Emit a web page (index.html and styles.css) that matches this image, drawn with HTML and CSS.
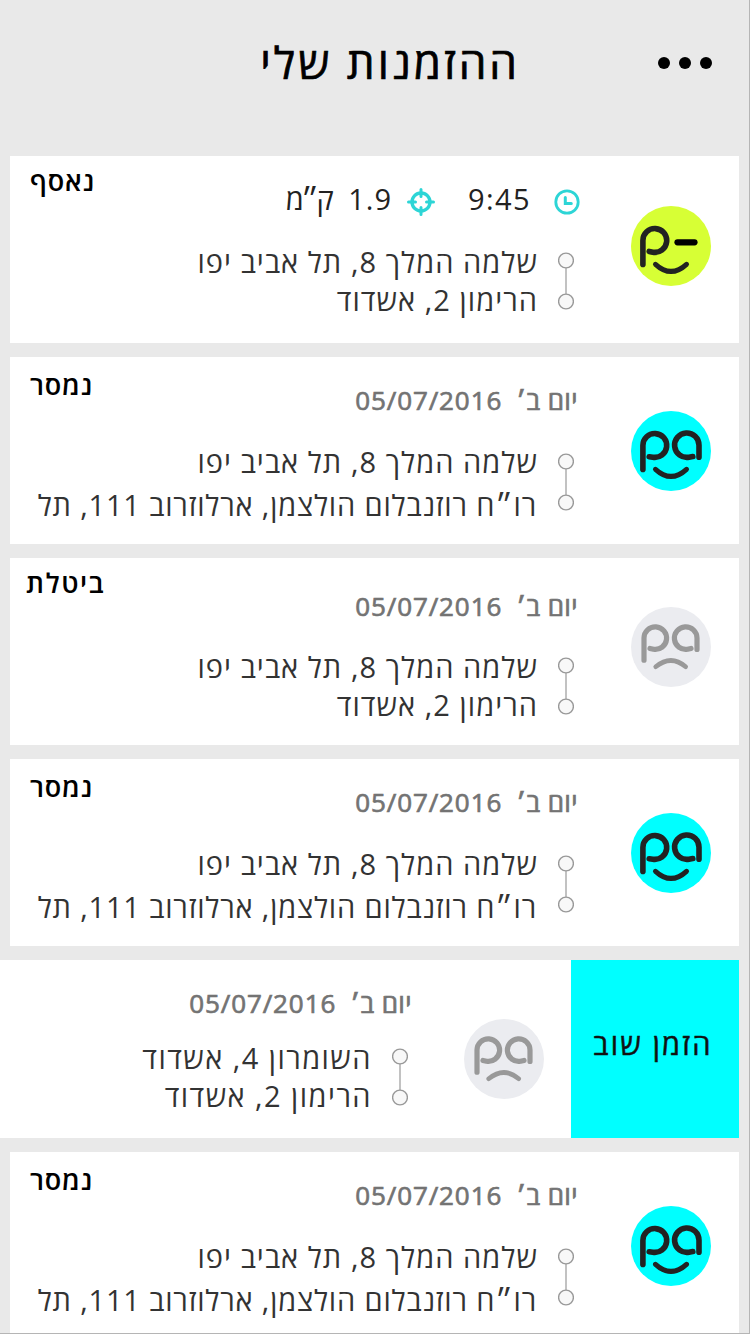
FILE: index.html
```
<!DOCTYPE html>
<html lang="he" dir="rtl">
  <head>
    <meta charset="utf-8">
    <title>ההזמנות שלי</title>
    <link rel="stylesheet" href="styles.css">
  </head>
  <body>
    <svg class="defs" width="0" height="0">
      <symbol id="happy" viewBox="0 0 80 80">
        <path d="M11.9 58.4V34.4A11.9 11.9 0 1 1 21.8 46.2L18.2 45.7M68 46.2V34.2A12.2 12.2 0 1 0 58 46.2L61.8 45.6" stroke-width="5.6" />
        <path d="M24.5 58.3Q40 72.5 55.5 58.3" stroke-width="5" />
      </symbol>
      <symbol id="wink" viewBox="0 0 80 80">
        <path d="M11.9 58.4V34.4A11.9 11.9 0 1 1 21.8 46.2L18.2 45.4" stroke-width="5.6" />
        <path d="M24.5 58.3Q40 72.5 55.5 58.3" stroke-width="5" />
        <path d="M46.5 36.3H63.5" stroke="#000" stroke-width="6.2" />
      </symbol>
      <symbol id="sad" viewBox="0 0 80 80">
        <path d="M13 53.2V31A11.3 11.3 0 1 1 22.5 42.3L19 41.4M66 42.5V31A11.3 11.3 0 1 0 56.5 42.3L60 41.4" stroke-width="5.2" />
        <path d="M24.7 59.8Q40 47.2 54.7 59.8" stroke-width="4.6" />
      </symbol>
      <symbol id="route" viewBox="0 0 16 58">
        <path d="M8 16V42" stroke="#999" stroke-width="1.2" />
        <circle cx="8" cy="8.5" r="7.4" />
        <circle cx="8" cy="49.5" r="7.4" />
      </symbol>
    </svg>

    <div class="page">
      <header class="header">
        <div class="menu"><i></i><i></i><i></i></div>
        <h1 class="title">ההזמנות שלי</h1>
      </header>

      <div class="orders">
        <div class="order active">
          <svg class="avatar lime"><use href="#wink" /></svg>
          <div class="info">
            <div class="head">
              <div class="eta">
                <svg class="clock" viewBox="0 0 26 26">
                  <circle cx="13" cy="13" r="11.2" stroke-width="2.8" />
                  <path d="M11.3 8.5V14.6H17.3" stroke-width="3" />
                </svg>
                <span class="time">9:45</span>
                <svg class="target" viewBox="0 0 28 28">
                  <circle cx="14" cy="14" r="9" stroke-width="3.4" />
                  <path d="M14 1.5V8.5M14 19.5V26.5M1.5 14H8.5M19.5 14H26.5" stroke-width="3" />
                </svg>
                <span class="distance">1.9</span>
                <span class="unit">ק״מ</span>
              </div>
              <div class="status">נאסף</div>
            </div>
            <div class="trip">
              <svg class="route"><use href="#route" /></svg>
              <div class="addresses">
                <div>שלמה המלך 8, תל אביב יפו</div>
                <div>הרימון 2, אשדוד</div>
              </div>
            </div>
          </div>
        </div>

        <div class="order delivered">
          <svg class="avatar cyan"><use href="#happy" /></svg>
          <div class="info">
            <div class="head">
              <div class="date"><span class="day">יום ב׳</span><span>05/07/2016</span></div>
              <div class="status">נמסר</div>
            </div>
            <div class="trip">
              <svg class="route"><use href="#route" /></svg>
              <div class="addresses">
                <div>שלמה המלך 8, תל אביב יפו</div>
                <div class="long">רו״ח רוזנבלום הולצמן, ארלוזרוב 111, תל</div>
              </div>
            </div>
          </div>
        </div>

        <div class="order cancelled">
          <svg class="avatar gray"><use href="#sad" /></svg>
          <div class="info">
            <div class="head">
              <div class="date"><span class="day">יום ב׳</span><span>05/07/2016</span></div>
              <div class="status">ביטלת</div>
            </div>
            <div class="trip">
              <svg class="route"><use href="#route" /></svg>
              <div class="addresses">
                <div>שלמה המלך 8, תל אביב יפו</div>
                <div>הרימון 2, אשדוד</div>
              </div>
            </div>
          </div>
        </div>

        <div class="order delivered">
          <svg class="avatar cyan"><use href="#happy" /></svg>
          <div class="info">
            <div class="head">
              <div class="date"><span class="day">יום ב׳</span><span>05/07/2016</span></div>
              <div class="status">נמסר</div>
            </div>
            <div class="trip">
              <svg class="route"><use href="#route" /></svg>
              <div class="addresses">
                <div>שלמה המלך 8, תל אביב יפו</div>
                <div class="long">רו״ח רוזנבלום הולצמן, ארלוזרוב 111, תל</div>
              </div>
            </div>
          </div>
        </div>

        <div class="order swiped">
          <button class="again">הזמן שוב</button>
          <svg class="avatar gray"><use href="#sad" /></svg>
          <div class="info">
            <div class="head">
              <div class="date"><span class="day">יום ב׳</span><span>05/07/2016</span></div>
            </div>
            <div class="trip">
              <svg class="route"><use href="#route" /></svg>
              <div class="addresses">
                <div>השומרון 4, אשדוד</div>
                <div>הרימון 2, אשדוד</div>
              </div>
            </div>
          </div>
        </div>

        <div class="order delivered">
          <svg class="avatar cyan"><use href="#happy" /></svg>
          <div class="info">
            <div class="head">
              <div class="date"><span class="day">יום ב׳</span><span>05/07/2016</span></div>
              <div class="status">נמסר</div>
            </div>
            <div class="trip">
              <svg class="route"><use href="#route" /></svg>
              <div class="addresses">
                <div>שלמה המלך 8, תל אביב יפו</div>
                <div class="long">רו״ח רוזנבלום הולצמן, ארלוזרוב 111, תל</div>
              </div>
            </div>
          </div>
        </div>
      </div>
    </div>
  </body>
</html>
```
FILE: styles.css
```
* {
  box-sizing: border-box;
}

body {
  margin: 0;
  font-family: "Open Sans", sans-serif;
  color: #333;
}

.defs {
  display: none;
}

.page {
  width: 750px;
  height: 1334px;
  overflow: hidden;
  background: #e9e9e9;
  border-right: 1px solid #b5b5b5;
  border-bottom: 1px solid #b5b5b5;
}

.header {
  height: 156px;
  display: flex;
  align-items: flex-start;
  padding-right: 37px;
}

.menu {
  display: flex;
  gap: 9px;
  margin-top: 57px;
}

.menu i {
  width: 12px;
  height: 12px;
  border-radius: 50%;
  background: #000;
}

.title {
  margin: 32px 138px 0 0;
  font-size: 44px;
  font-weight: 400;
  line-height: 60px;
  letter-spacing: 3px;
  color: #000;
  white-space: nowrap;
  -webkit-text-stroke: 0.7px;
}

.orders {
  display: flex;
  flex-direction: column;
  gap: 14px;
  padding: 0 10px;
}

.order {
  height: 187px;
  display: flex;
  align-items: flex-start;
  padding-right: 28px;
  background: #fff;
}

.avatar {
  flex: none;
  width: 80px;
  height: 80px;
  margin-top: 54px;
  border-radius: 50%;
  fill: none;
  stroke: #222;
  stroke-linecap: round;
  stroke-linejoin: round;
}

.lime {
  background: #d7ff35;
}

.cyan {
  background: #00ffff;
}

.gray {
  background: #ebecf0;
  stroke: #999;
}

.info {
  flex: 1;
  min-width: 0;
  margin-right: 51px;
}

.head {
  height: 85px;
  display: flex;
  justify-content: space-between;
  align-items: flex-start;
  padding-left: 20px;
  line-height: 40px;
}

.date {
  display: flex;
  gap: 14px;
  margin: 23px 2px 0 0;
  font-size: 26px;
  color: #737373;
  letter-spacing: 0.9px;
  -webkit-text-stroke: 0.7px;
}

.day {
  letter-spacing: 0.4px;
}

.status {
  margin-top: 8px;
  font-size: 27px;
  font-weight: 600;
  letter-spacing: 0.8px;
  color: #000;
}

.eta {
  display: flex;
  align-items: center;
  margin-top: 23px;
  font-size: 29px;
  color: #222;
}

.eta svg {
  fill: none;
  stroke: #2dd5d6;
  stroke-linecap: round;
}

.clock {
  width: 26px;
  height: 26px;
  margin-top: 5px;
}

.target {
  width: 28px;
  height: 28px;
  margin: 5px 33px 0 15px;
}

.time {
  margin-right: 23px;
  letter-spacing: 1.4px;
}

.distance {
  letter-spacing: 1px;
  margin-left: 17px;
}

.unit {
  letter-spacing: -2.4px;
}

.trip {
  display: flex;
  align-items: flex-start;
}

.route {
  flex: none;
  width: 16px;
  height: 58px;
  margin: 11px 6px 0 20px;
  fill: #f8f8f8;
  stroke: #999;
  stroke-width: 1.4;
}

.addresses {
  font-size: 29px;
  line-height: 40px;
  letter-spacing: 1.05px;
  white-space: nowrap;
}

.addresses div {
  height: 38px;
}

.addresses .long {
  margin: 5px 1px 0 0;
  letter-spacing: 0.83px;
}

.active .avatar {
  margin-top: 50px;
}

.active .head {
  height: 86px;
}

.active .status,
.cancelled .status {
  margin-top: 5px;
}

.active .route,
.cancelled .route,
.swiped .route {
  margin-top: 10px;
}

.cancelled .avatar {
  margin-top: 49px;
}

.cancelled .head {
  height: 89px;
  padding-left: 16px;
}

.cancelled .date {
  margin-top: 28px;
}

.cancelled .status {
  letter-spacing: 1.6px;
}

.swiped {
  height: 178px;
  margin-left: -10px;
  padding-right: 0;
}

.swiped .avatar {
  margin: 59px 27px 0 0;
}

.swiped .info {
  margin-right: 50px;
}

.swiped .head {
  height: 78px;
}

.swiped .addresses {
  letter-spacing: 1.45px;
}

.again {
  flex: none;
  width: 168px;
  height: 178px;
  padding: 0 4px 12px 0;
  border: none;
  background: #00ffff;
  font: 400 29px "Open Sans", sans-serif;
  letter-spacing: 2.2px;
  color: #111;
  -webkit-text-stroke: 0.5px;
}
```
